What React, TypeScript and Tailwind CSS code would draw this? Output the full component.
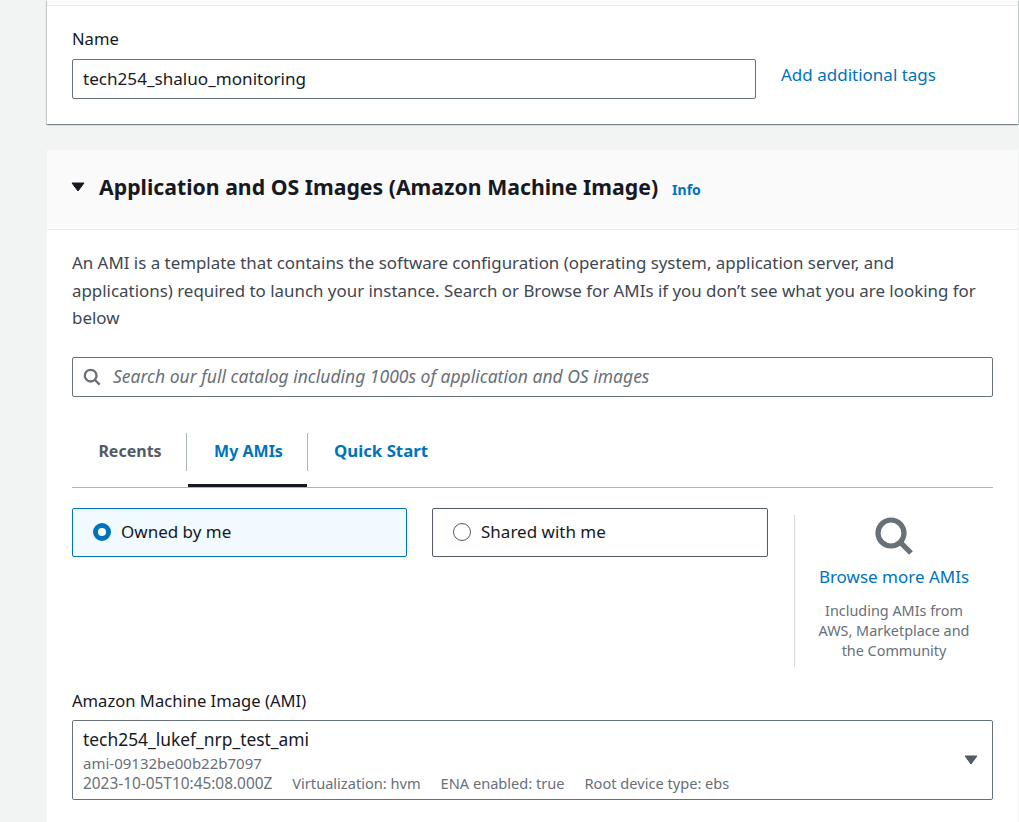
function Caret({ className }: { className: string }) {
  return (
    <svg viewBox="0 0 14 10" className={className}>
      <path d="M1 1h12L7 9z" fill="currentColor" stroke="currentColor" strokeLinejoin="round" />
    </svg>
  );
}

function SearchIcon({ className, stroke }: { className: string; stroke: number }) {
  return (
    <svg viewBox="0 0 20 20" fill="none" stroke="#687078" strokeWidth={stroke} className={className}>
      <circle cx="8.5" cy="8.5" r="6.5" />
      <path d="M13.3 13.3 18.5 18.5" />
    </svg>
  );
}

export default function App() {
  return (
    <div className="h-[822px] w-[1019px] overflow-hidden bg-[#f2f3f3] pl-[47px] pr-px font-['Noto_Sans'] text-[#16191f]">
      <section className="h-[124px] bg-white shadow-[0_1px_1px_0_rgba(0,28,36,0.3),1px_1px_1px_0_rgba(0,28,36,0.15),-1px_1px_1px_0_rgba(0,28,36,0.15)]">
        <div className="h-[6px] border-b border-[#eaeded] bg-[#fafafa]" />
        <div className="px-[25px] pt-[22px]">
          <div className="text-[16.6px] leading-[22px]">Name</div>
          <div className="mt-[9px] flex items-center">
            <div className="flex h-[40px] w-[684px] items-center rounded-[2px] border border-[#687078] px-[10px] text-[17.1px]">
              tech254_shaluo_monitoring
            </div>
            <a className="mb-[8px] ml-[25px] text-[17px] text-[#0073bb]">Add additional tags</a>
          </div>
        </div>
      </section>

      <section className="mt-[26px] h-[700px] bg-white">
        <header className="flex h-[80px] items-center border-b border-[#eaeded] bg-[#fafafa] pb-[5px] pl-[24px]">
          <Caret className="mr-[14px] h-[10px] w-[14px] text-[#16191f]" />
          <h2 className="text-[21.26px] font-bold leading-[26px]">Application and OS Images (Amazon Machine Image)</h2>
          <a className="ml-[14px] mt-[5px] text-[14px] font-bold text-[#0073bb]">Info</a>
        </header>

        <div className="px-[25px]">
          <p className="mt-[19px] w-[921px] text-[16.9px] leading-[27.5px] text-[#414750]">
            An AMI is a template that contains the software configuration (operating system, application server, and
            applications) required to launch your instance. Search or Browse for AMIs if you don’t see what you are
            looking for below
          </p>

          <div className="mt-[25px] flex h-[40px] w-[921px] items-center rounded-[2px] border border-[#687078] pl-[10px]">
            <SearchIcon className="mr-[12px] h-[18px] w-[18px]" stroke={2.6} />
            <span className="text-[17.5px] italic text-[#687078]">Search our full catalog including 1000s of application and OS images</span>
          </div>

          <div className="mt-[36px] flex h-[55px] w-[921px] border-b border-[#aab7b8]">
            <div className="flex h-[38px] w-[115px] items-center justify-center border-r border-[#aab7b8] pb-[2px] pl-[2px] text-[16px] font-bold text-[#545b64]">
              Recents
            </div>
            <div className="relative flex h-[38px] w-[121px] items-center justify-center border-r border-[#aab7b8] pb-[2px] pl-[3px] text-[16px] font-bold text-[#0073bb]">
              My AMIs
              <span className="absolute -bottom-[16px] left-px right-0 h-[3px] bg-[#16191f]" />
            </div>
            <div className="flex h-[38px] items-center pb-[2px] pl-[26px] text-[16.8px] font-bold text-[#0073bb]">Quick Start</div>
          </div>

          <div className="mt-[20px] flex">
            <div className="flex h-[49px] w-[335px] items-center rounded-[2px] border border-[#0073bb] bg-[#f1faff] pl-[20px] text-[17px]">
              <span className="mr-[10px] h-[18px] w-[18px] rounded-full border-[5px] border-[#0073bb] bg-white" />
              Owned by me
            </div>
            <div className="ml-[25px] flex h-[49px] w-[336px] items-center rounded-[2px] border border-[#545b64] pl-[20px] text-[17px]">
              <span className="mr-[10px] h-[18px] w-[18px] rounded-full border border-[#545b64] bg-white" />
              Shared with me
            </div>
            <div className="ml-[26px] mt-[7px] flex h-[152px] w-[199px] flex-col items-center border-l border-[#d5dbdb]">
              <SearchIcon className="mt-[1px] h-[40px] w-[40px]" stroke={2.6} />
              <a className="mt-[8px] text-[17px] text-[#0073bb]">Browse more AMIs</a>
              <p className="mt-[12px] text-center text-[14.4px] leading-[20px] text-[#687078]">
                Including AMIs from
                <br />
                AWS, Marketplace and
                <br />
                the Community
              </p>
            </div>
          </div>

          <div className="mt-[23px] text-[16.6px] leading-[22px]">Amazon Machine Image (AMI)</div>
          <div className="relative mt-[8px] h-[80px] w-[921px] rounded-[2px] border border-[#687078] pl-[10px] pt-[7px]">
            <div className="text-[17.4px] leading-[22px]">tech254_lukef_nrp_test_ami</div>
            <div className="mt-[3px] text-[15px] leading-[20px] text-[#687078]">ami-09132be00b22b7097</div>
            <div className="flex items-baseline gap-[20px] text-[14.6px] leading-[20px] text-[#687078]">
              <span className="text-[15.4px]">2023-10-05T10:45:08.000Z</span>
              <span>Virtualization: hvm</span>
              <span>ENA enabled: true</span>
              <span>Root device type: ebs</span>
            </div>
            <Caret className="absolute right-[14px] top-[34px] h-[10px] w-[14px] text-[#545b64]" />
          </div>
        </div>
      </section>
    </div>
  );
}
